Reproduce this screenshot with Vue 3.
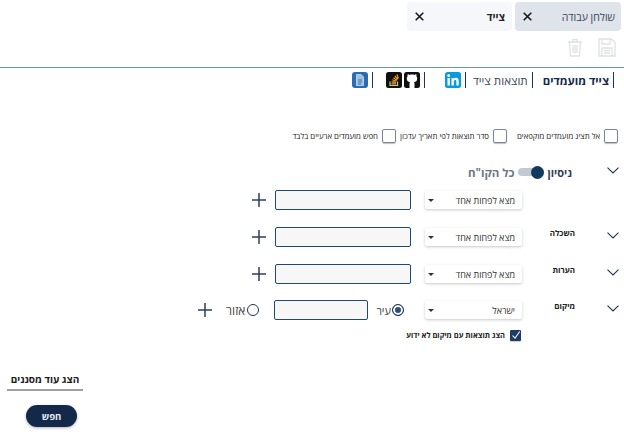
<script setup>
const rows = [
  { label: '', value: 'מצא לפחות אחד' },
  { label: 'השכלה', value: 'מצא לפחות אחד' },
  { label: 'הערות', value: 'מצא לפחות אחד' }
]
const checks = ['אל תציג מועמדים מוקפאים', 'סדר תוצאות לפי תאריך עדכון', 'חפש מועמדים ארעיים בלבד']
</script>

<template>
  <div class="page" dir="rtl">
    <div class="tabs">
      <div class="tab active"><span>שולחן עבודה</span><svg class="x" width="9" height="9" viewBox="0 0 9 9"><path d="M.7.7l7.600 7.600M8.300.7.700 8.300" /></svg></div>
      <div class="tab"><span class="bold">צייד</span><svg class="x" width="9" height="9" viewBox="0 0 9 9"><path d="M.7.7l7.600 7.600M8.300.7.700 8.300" /></svg></div>
    </div>
    <div class="tools">
      <svg width="18" height="19" viewBox="0 0 18 19" fill="none" stroke="#dfe1e3" stroke-width="1.3">
        <path d="M1 1h12l4 3v14H1z" />
        <path d="M4 1v5h8V1M4 18v-8h10v8M6 12.500h6M6 15h6" />
      </svg>
      <svg width="16" height="19" viewBox="0 0 16 19" fill="none" stroke="#dfe1e3" stroke-width="1.3">
        <path d="M1 4h14M6 4V1.500h4V4M2.500 4l1 14h9l1-14M6 7v8M8 7v8M10 7v8" />
      </svg>
    </div>
    <div class="rule"></div>
    <nav class="nav">
      <span class="sep"></span>
      <span class="nav-item strong">צייד מועמדים</span>
      <span class="sep"></span>
      <span class="nav-item">תוצאות צייד</span>
      <span class="sep"></span>
      <svg class="ico in" width="16" height="16" viewBox="0 0 16 16">
        <rect width="16" height="16" rx="2.500" fill="#0a9bdc" />
        <rect x="2.500" y="6" width="2.300" height="7.500" fill="#fff" />
        <circle cx="3.650" cy="3.700" r="1.400" fill="#fff" />
        <path d="M6.500 6h2.200v1.100c.5-.8 1.300-1.300 2.400-1.300 2 0 2.600 1.300 2.600 3.300v4.400h-2.300V9.600c0-1-.3-1.700-1.200-1.700-1 0-1.400.8-1.400 1.800v3.800H6.500z" fill="#fff" />
      </svg>
      <span class="sep"></span>
      <svg class="ico gh" width="16" height="16" viewBox="0 0 16 16">
        <rect width="16" height="16" rx="2.500" fill="#111" />
        <path d="M8 2.500c-1 0-1.800.2-2.300.4C5 2.400 4.200 2.200 3.700 2.300c-.3.800-.3 1.500-.1 2-.5.600-.8 1.300-.8 2.200 0 2.600 1.500 3.400 3.300 3.700-.4.300-.6.800-.6 1.400v4.400h5V11.600c0-.6-.2-1.100-.6-1.400 1.800-.3 3.300-1.100 3.300-3.700 0-.9-.3-1.600-.8-2.200.2-.5.200-1.200-.1-2-.5-.1-1.300.1-2 .6-.5-.2-1.300-.4-2.300-.4z" fill="#fff" />
      </svg>
      <svg class="ico so" width="16" height="16" viewBox="0 0 16 16">
        <rect width="16" height="16" rx="2.500" fill="#111" />
        <path d="M4 9.500v4h7.500v-4" fill="none" stroke="#c9c0a5" stroke-width="1.200" />
        <path d="M5.500 11.800h4.500M5.600 9.800l4.300.6M6.200 7.800l4.100 1.400M7.400 5.800l3.500 2.500M9 4l2.700 3.300M11 2.500l1.300 4" stroke="#f0a01c" stroke-width="1.200" fill="none" />
      </svg>
      <span class="sep"></span>
      <svg class="ico" width="16" height="16" viewBox="0 0 16 16">
        <rect width="16" height="16" rx="3" fill="#2b6cb0" />
        <path d="M4.500 2.500h4.700l2.300 2.500v8.500h-7z" fill="#9fc0e0" stroke="#dbe7f3" stroke-width=".7" />
        <path d="M6 8h4M6 10h4M6 12h3" stroke="#2b6cb0" stroke-width=".9" />
      </svg>
    </nav>

    <div class="checks">
      <label v-for="c in checks" :key="c" class="check">
        <span class="box"></span>
        <span>{{ c }}</span>
      </label>
    </div>

    <div class="group-head">
      <svg class="chev" width="12" height="7" viewBox="0 0 12 7" fill="none"><path d="M.5.700 6 6 11.500.700" /></svg>
      <span class="title">ניסיון</span>
      <span class="toggle"><span class="knob"></span></span>
      <span class="all">כל הקו"ח</span>
    </div>

    <div v-for="(r, i) in rows" :key="i" class="row">
      <svg class="chev" :class="{ hidden: !r.label }" width="12" height="7" viewBox="0 0 12 7" fill="none"><path d="M.5.700 6 6 11.500.700" /></svg>
      <span class="label">{{ r.label }}</span>
      <div class="select"><span>{{ r.value }}</span><i class="caret"></i></div>
      <div class="input"></div>
      <svg class="plus" width="14" height="14" viewBox="0 0 14 14"><path d="M7 0v14M0 7h14" /></svg>
    </div>

    <div class="row loc">
      <svg class="chev" width="12" height="7" viewBox="0 0 12 7" fill="none"><path d="M.5.700 6 6 11.500.700" /></svg>
      <span class="label">מיקום</span>
      <div class="select"><span>ישראל</span><i class="caret"></i></div>
      <span class="radio on"></span>
      <span class="radio-label city">עיר</span>
      <div class="input small"></div>
      <span class="radio"></span>
      <span class="radio-label area">אזור</span>
      <svg class="plus" width="14" height="14" viewBox="0 0 14 14"><path d="M7 0v14M0 7h14" /></svg>
    </div>

    <label class="unknown">
      <span class="tick">
        <svg width="10" height="10" viewBox="0 0 10 10" fill="none"><path d="M1.500 5.500 4 8.200 8.700 1.500" stroke="#fff" stroke-width="1.100" /></svg>
      </span>
      <span>הצג תוצאות עם מיקום לא ידוע</span>
    </label>

    <div class="footer">
      <span class="more">הצג עוד מסננים</span>
      <button class="go">חפש</button>
    </div>
  </div>
</template>

<style scoped>
.page {
  width: 624px;
  height: 434px;
  overflow: hidden;
  background: #fff;
  font-family: "Open Sans", "Liberation Sans", Arial, sans-serif;
  color: #1a2433;
  box-sizing: border-box;
  padding-top: 2px;
}
.tabs {
  display: flex;
  gap: 3px;
  padding-right: 3px;
}
.tab {
  width: 105px;
  height: 29px;
  box-sizing: border-box;
  padding: 0 6px 0 8px;
  border-radius: 4px;
  background: #f5f7fb;
  font-size: 10.500px;
  display: flex;
  align-items: center;
  justify-content: space-between;
}
.tab.active {
  width: 106px;
  background: #dfe3ea;
  color: #3a4656;
}
.bold { font-weight: 700; font-size: 10.500px; color: #222; margin-right: 1px; }
.x { flex: none; }
.x path { stroke: #111; stroke-width: 1.500; fill: none; }
.tools {
  display: flex;
  align-items: center;
  gap: 15px;
  padding: 7px 8px 0 0;
  height: 19px;
}
.rule {
  height: 1px;
  background: #5f9db6;
  margin-top: 10px;
}
.nav {
  display: flex;
  align-items: center;
  height: 20px;
  margin-top: 2px;
  padding-right: 10px;
}
.sep {
  width: 1px;
  height: 16px;
  background: #1d3557;
}
.nav-item {
  font-size: 11.600px;
  margin: 0 4px 0 7px;
  color: #3a4656;
}
.nav-item.strong { font-size: 11.400px; font-weight: 700; color: #14294a; margin-left: 10px; }
.ico { flex: none; margin: 0 4px; }
.ico.in { margin-left: 20px; }
.ico.gh { margin-left: 2px; }
.ico.so { margin-right: 0; margin-left: 13px; }
.checks {
  display: flex;
  padding-right: 6px;
  margin-top: 38px;
  height: 15px;
}
.check {
  display: flex;
  align-items: center;
  gap: 4px;
  width: 111px;
  flex: none;
  font-size: 7.800px;
  color: #222;
  white-space: nowrap;
}
.box {
  width: 12px;
  height: 12px;
  border: 1px solid #7a8698;
  border-radius: 2px;
  box-shadow: 0 1px 1px rgba(0,0,0,.25);
  flex: none;
}
.group-head {
  display: flex;
  align-items: center;
  height: 20px;
  margin-top: 19px;
  padding-right: 5px;
}
.chev { flex: none; position: relative; top: -2px; }
.chev path { stroke: #1d3557; stroke-width: 1.100; }
.hidden { visibility: hidden; }
.title {
  font-size: 11px;
  font-weight: 700;
  color: #33415c;
  margin-right: 35px;
}
.toggle {
  width: 26px;
  height: 8px;
  border-radius: 4px;
  background: #c3c9d2;
  position: relative;
  margin-right: 4px;
}
.knob {
  position: absolute;
  right: 0;
  top: -2.500px;
  width: 13px;
  height: 13px;
  border-radius: 50%;
  background: #12395f;
}
.all {
  font-size: 11.500px;
  font-weight: 700;
  color: #6b7686;
  margin-right: 3px;
}
.row {
  display: flex;
  align-items: center;
  height: 20px;
  margin-top: 17px;
  padding-right: 5px;
}
.group-head + .row { margin-top: 8px; }
.row.loc { margin-top: 16px; }
.label {
  width: 83px;
  font-size: 8px;
  font-weight: 700;
  color: #222;
  padding-right: 32px;
  box-sizing: border-box;
  flex: none;
  position: relative;
  top: -5px;
}
.select {
  width: 97px;
  height: 18px;
  border-radius: 2px;
  background: #fff;
  box-shadow: 0 1px 3px rgba(0,0,0,.22);
  display: flex;
  align-items: center;
  justify-content: space-between;
  padding: 0 7px 0 3px;
  box-sizing: border-box;
  font-size: 9px;
  color: #333;
  margin-right: 2px;
  flex: none;
}
.caret {
  width: 0;
  height: 0;
  border-left: 3px solid transparent;
  border-right: 3px solid transparent;
  border-top: 3px solid #333;
}
.input {
  width: 136px;
  height: 20px;
  box-sizing: border-box;
  background: #f7f7f7;
  border: 1px solid #1d4a73;
  border-radius: 2px;
  margin-right: 14px;
  flex: none;
}
.input.small { width: 94px; margin-right: 8px; }
.plus { margin-right: 9px; flex: none; }
.plus path { stroke: #2e3f5f; stroke-width: 1.500; }
.radio {
  width: 12px;
  height: 12px;
  box-sizing: border-box;
  border: 1.500px solid #1d3557;
  border-radius: 50%;
  flex: none;
}
.radio.on {
  margin-right: 21px;
  background: #2f4d78;
  box-shadow: inset 0 0 0 2px #fff;
}
.radio-label { color: #444; }
.radio-label.city { font-size: 11px; margin-right: 1px; }
.radio-label.area { font-size: 12px; margin-right: 2px; }
.loc .input + .radio { margin-right: 15px; }
.loc .plus { margin-right: 14px; }
.unknown {
  display: flex;
  align-items: center;
  gap: 5px;
  padding-right: 103px;
  margin-top: 8px;
  font-size: 7.500px;
  font-weight: 700;
  color: #222;
  height: 14px;
}
.tick {
  width: 11px;
  height: 11px;
  background: #1f3a63;
  border-radius: 1px;
  display: flex;
  align-items: center;
  justify-content: center;
  box-shadow: 0 1px 1px rgba(0,0,0,.2);
  flex: none;
}
.footer {
  direction: ltr;
  display: flex;
  flex-direction: column;
  align-items: flex-start;
  padding-left: 7px;
  margin-top: 30px;
}
.more {
  direction: rtl;
  width: 76px;
  text-align: center;
  font-size: 10px;
  font-weight: 700;
  color: #1a1a1a;
  border-bottom: 2px solid #a0a0a0;
  padding-bottom: 3px;
}
.go {
  width: 51px;
  height: 22px;
  margin: 14px 0 0 19px;
  border: 0;
  border-radius: 11px;
  background: #14294a;
  color: #e9edf3;
  font-family: inherit;
  font-size: 9.500px;
  font-weight: 700;
  box-shadow: 0 1px 3px rgba(0,0,0,.3);
  padding: 0;
}
</style>
